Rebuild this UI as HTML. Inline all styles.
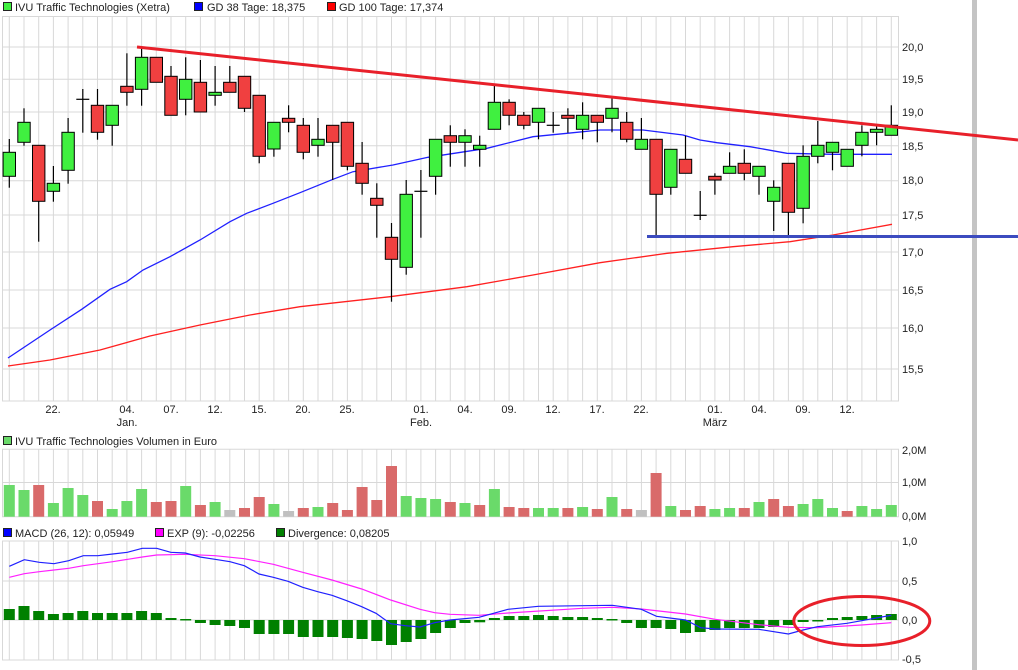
<!DOCTYPE html>
<html><head><meta charset="utf-8"><style>
html,body{margin:0;padding:0;background:#fff;width:1018px;height:670px;overflow:hidden}
svg{display:block}
text{font-family:"Liberation Sans",Arial,sans-serif;font-size:11px;fill:#222}
</style></head><body>
<svg id="s" width="1018" height="670" viewBox="0 0 1018 670" xmlns="http://www.w3.org/2000/svg">
<rect x="972" y="0" width="5" height="670" fill="#c4c4c4"/>
<g id="grid"></g>
<g id="plot"></g>
<!-- legends -->
<rect x="3.5" y="2.5" width="8" height="8" fill="#40f040" stroke="#222"/>
<text x="15" y="11">IVU Traffic Technologies (Xetra)</text>
<rect x="194.5" y="2.5" width="8" height="8" fill="#0000ff" stroke="#222"/>
<text x="207" y="11">GD 38 Tage: 18,375</text>
<rect x="327.5" y="2.5" width="8" height="8" fill="#ff0000" stroke="#222"/>
<text x="339" y="11">GD 100 Tage: 17,374</text>
<rect x="3.5" y="436.5" width="8" height="8" fill="#6ada6a" stroke="#222"/>
<text x="15" y="445">IVU Traffic Technologies Volumen in Euro</text>
<rect x="3.5" y="528.5" width="8" height="8" fill="#0000ff" stroke="#222"/>
<text x="15" y="537">MACD (26, 12): 0,05949</text>
<rect x="155.5" y="528.5" width="8" height="8" fill="#ff00ff" stroke="#222"/>
<text x="167" y="537">EXP (9): -0,02256</text>
<rect x="276.5" y="528.5" width="8" height="8" fill="#008000" stroke="#222"/>
<text x="288" y="537">Divergence: 0,08205</text>
<!-- y labels -->
<g>
<text x="902" y="51">20,0</text><text x="902" y="83">19,5</text><text x="902" y="116">19,0</text>
<text x="902" y="150">18,5</text><text x="902" y="184">18,0</text><text x="902" y="219">17,5</text>
<text x="902" y="256">17,0</text><text x="902" y="294">16,5</text><text x="902" y="332">16,0</text>
<text x="902" y="373">15,5</text>
<text x="902" y="454">2,0M</text><text x="902" y="486">1,0M</text><text x="902" y="520">0,0M</text>
<text x="902" y="545">1,0</text><text x="902" y="585">0,5</text><text x="902" y="624">0,0</text><text x="902" y="663">-0,5</text>
</g>
<g text-anchor="middle">
<text x="53" y="413">22.</text><text x="127" y="413">04.</text><text x="171" y="413">07.</text>
<text x="215" y="413">12.</text><text x="259" y="413">15.</text><text x="303" y="413">20.</text>
<text x="347" y="413">25.</text><text x="421" y="413">01.</text><text x="465" y="413">04.</text>
<text x="509" y="413">09.</text><text x="553" y="413">12.</text><text x="597" y="413">17.</text>
<text x="641" y="413">22.</text><text x="715" y="413">01.</text><text x="759" y="413">04.</text>
<text x="803" y="413">09.</text><text x="847" y="413">12.</text>
<text x="127" y="426">Jan.</text><text x="421" y="426">Feb.</text><text x="715" y="426">März</text>
</g>
</svg>
<script>
var X=function(i){return 9.3+14.7*i;};
var g='';
function vl(y1,y2){for(var i=0;i<=60;i++){var x=X(i).toFixed(1);g+='<line x1="'+x+'" y1="'+y1+'" x2="'+x+'" y2="'+y2+'"/>';}
 g+='<line x1="2.5" y1="'+y1+'" x2="2.5" y2="'+y2+'"/><line x1="898.5" y1="'+y1+'" x2="898.5" y2="'+y2+'"/>';}
function hl(y){g+='<line x1="2" y1="'+y+'" x2="899" y2="'+y+'"/>';}
vl(16,401);[16.5,47,79.3,112,145.7,180.7,215,252,290,328,369,401].forEach(hl);
vl(449,517);[449.3,482.5,516.7].forEach(hl);
vl(541,660);[541,581,620,660].forEach(hl);
document.getElementById('grid').innerHTML='<g stroke="#d8d8d8" stroke-width="1">'+g+'</g>';
var C=[[152.3,176.3,139,187.7,'g'],[122.3,142.3,108.3,145.7,'g'],[145.3,201.3,145.3,241.7,'r'],[183.3,191.3,166,201.7,'g'],[132.3,170.3,118,183.7,'g'],[99.3,99.3,89,132.7,'d'],[105.3,132.3,89,139.7,'r'],[105.3,125.3,105.3,145.7,'g'],[86.3,92.3,53.3,105.7,'r'],[57.3,89.3,46.7,105.7,'g'],[57.3,82.3,57.3,82.3,'r'],[76.3,115.3,66,115.3,'r'],[79.3,99.3,57.3,115.3,'g'],[82.3,112,60,112,'r'],[92.3,95.3,66,105.7,'g'],[82.3,92.3,66,92.3,'r'],[76.3,108.3,76.3,112,'r'],[95.3,156.3,95.3,163.3,'r'],[122.3,149,122.3,156.7,'g'],[118.3,122.3,105.3,132.3,'r'],[125.3,152.3,118,159.3,'r'],[139.3,145.3,118,156.7,'g'],[125.3,142.3,125.3,180,'r'],[122.3,166.3,122.3,170.3,'r'],[163.3,183.3,142,194.7,'r'],[198.3,205.3,183.3,237.7,'r'],[237.3,259.3,223,301.7,'r'],[194.3,267.3,180,274.7,'g'],[191.3,191.3,170,237.7,'d'],[139.3,176.3,139.3,194.7,'g'],[135.7,142.3,125.3,166.7,'r'],[135.7,142.3,129.3,166.7,'g'],[145.3,149.3,135.7,166.7,'g'],[102.3,129.3,85.3,129.3,'g'],[102.3,115.3,99.3,125.3,'r'],[115.3,125.3,112,129.3,'r'],[108.3,122.3,108.3,139.3,'g'],[125.3,125.3,112,132.7,'d'],[115.3,118.3,108.3,132.7,'r'],[115.3,129.3,102.3,139.3,'g'],[115.3,122.3,115.3,142.3,'r'],[108.3,118.3,98.3,132.3,'g'],[122.3,139.3,112,142.3,'r'],[139.3,149.3,118,149.3,'g'],[139.3,194.3,139.3,235,'r'],[149.3,187.3,149.3,194.7,'g'],[159.3,173.3,135.7,173.3,'r'],[215.3,215.3,191,220,'d'],[176.3,180,173.3,194.7,'r'],[166.3,173.3,152.3,173.3,'g'],[163.3,173.3,149.3,180.3,'r'],[166.3,176.3,166.3,194.7,'g'],[187.3,201.3,180.3,231,'g'],[163.3,212.3,163.3,235,'r'],[156.3,208.3,145.3,223.3,'g'],[145.3,156.3,121,163.3,'g'],[142.3,152.3,142.3,170.3,'g'],[149.3,166.3,149.3,166.3,'g'],[132.3,145.3,125.3,156.3,'g'],[129.3,132.3,125.3,145.3,'g'],[125.3,135.3,105.3,135.3,'g']];
var p='';
function pl(pts,col,w){p+='<polyline fill="none" stroke="'+col+'" stroke-width="'+w+'" points="'+pts+'"/>';}
// MAs
pl('8,366 50,360 100,350 150,336 200,325 250,315 300,306.7 390,296.7 467,286.7 533,275 600,262.7 667,253.3 733,246.7 790,241.7 833,235 892,224.3','#ff2020',1.3);
pl('8,358 50,330 81.7,309.3 110,289.3 126.7,281.7 143,270 170,256.7 200,240 230,221.7 246.7,213.3 273,203.3 300,192.7 333,179.3 353,171.7 393,165 428,157.3 487,148.3 533,136.7 567,133.3 600,130 643,130 683,135 700,140 717,142.7 750,146.7 787,153.3 833,154.3 892,154.3','#2020ff',1.3);
C.forEach(function(c,i){var x=X(i);
 p+='<line x1="'+x+'" y1="'+c[2]+'" x2="'+x+'" y2="'+c[3]+'" stroke="#000" stroke-width="1.2"/>';
 if(c[4]=='d'){p+='<line x1="'+(x-6.5)+'" y1="'+c[0]+'" x2="'+(x+6.5)+'" y2="'+c[0]+'" stroke="#000" stroke-width="1.2"/>';}
 else{p+='<rect x="'+(x-6.2)+'" y="'+c[0]+'" width="12.4" height="'+Math.max(c[1]-c[0],2)+'" fill="'+(c[4]=='g'?'#40f040':'#f04040')+'" stroke="#000" stroke-width="1"/>';}
});
// trend lines
p+='<line x1="137" y1="47" x2="1018" y2="140" stroke="#e8202a" stroke-width="3"/>';
p+='<line x1="647" y1="236.5" x2="1018" y2="236.5" stroke="#3c4bbf" stroke-width="3"/>';
// volume
var V=[[485,'g'],[490,'g'],[485,'r'],[503,'g'],[488,'g'],[495,'g'],[501,'r'],[509,'g'],[501,'g'],[489,'g'],[502,'r'],[501,'r'],[486,'g'],[505,'r'],[502,'g'],[510,'x'],[508,'r'],[497,'r'],[504,'g'],[511,'x'],[508,'r'],[507,'g'],[503,'r'],[510,'r'],[487,'r'],[500,'r'],[466,'r'],[496,'g'],[498,'g'],[499,'g'],[502,'r'],[503,'g'],[505,'r'],[489,'g'],[507,'r'],[508,'r'],[508,'g'],[508,'g'],[508,'r'],[507,'g'],[509,'r'],[497,'g'],[509,'r'],[510,'x'],[473,'r'],[506,'g'],[510,'r'],[506,'r'],[509,'g'],[508,'g'],[508,'r'],[502,'g'],[499,'r'],[506,'r'],[504,'g'],[499,'g'],[508,'g'],[511,'r'],[506,'g'],[509,'g'],[505,'g']];
V.forEach(function(v,i){var x=X(i);p+='<rect x="'+(x-5.5)+'" y="'+v[0]+'" width="11" height="'+(516.7-v[0])+'" fill="'+(v[1]=='g'?'#6ada6a':v[1]=='r'?'#d96a6a':'#c0c0c0')+'"/>';});
// divergence
var D=[609,606,611,614,613,611,613,613,613,611,613,618,619,623,625,626,628,634,634,634,637,637,637,638,639,641,645,642,639,633,628,623,622.3,618,616,616,615,616,617,617,618,619,623,628,628,629,633,632,630,628,628,628,627,625,622,621,618,617,616,615,614];
D.forEach(function(d,i){var x=X(i);var y=Math.min(d,620),h=Math.max(Math.abs(d-620),1.5);p+='<rect x="'+(x-5.5)+'" y="'+y+'" width="11" height="'+h+'" fill="#008000"/>';});
pl('9.3,577.3 24.3,573.7 39.3,571.7 54,570 68.7,568.3 83.3,565.7 112.7,561.7 142.3,557 156.7,555 185.3,554.3 215,555.7 244.3,558.7 273.3,564.3 302.7,572.3 332,580 361.7,589 390.7,600 420,609.3 434.7,612.7 450,614.3 479,615.3 508,613 582.6,608.3 612.3,607.3 641.3,609 685.5,614 715.2,619.3 758.7,624.7 788.4,627.3 817.4,627.7 861.6,625 891.3,622.7','#ff20ff',1.2);
pl('9.3,566.3 24.3,559.7 39.3,562.3 54,563.7 68.7,560.7 83.3,555.7 98,555.7 112.7,554 127.3,552.3 142.3,548.3 156.7,548.3 170.7,552.3 185.3,553 200,557 215,559.3 230,561.7 244.3,565.7 259,574 273.3,577.3 288,581.3 302.7,587.3 317.7,591.7 332,595.3 346.7,600.7 361.7,606.7 376,613.3 390.7,623.7 405.3,625.7 420,627 434.7,622.7 450,620 479,617.3 508,609.3 538.4,606.3 582.6,605.7 612.3,605.3 641.3,609.3 656.5,616.3 685.5,620 700.7,627.7 715.2,629 758.7,629.3 788.4,634 803,630 817.4,626.7 847,623.3 861.6,620.7 891.3,615.3','#2020ff',1.2);
p+='<ellipse cx="861.8" cy="621" rx="68" ry="24.5" fill="none" stroke="#e8202a" stroke-width="3"/>';
document.getElementById('plot').innerHTML=p;
</script>
</body></html>
